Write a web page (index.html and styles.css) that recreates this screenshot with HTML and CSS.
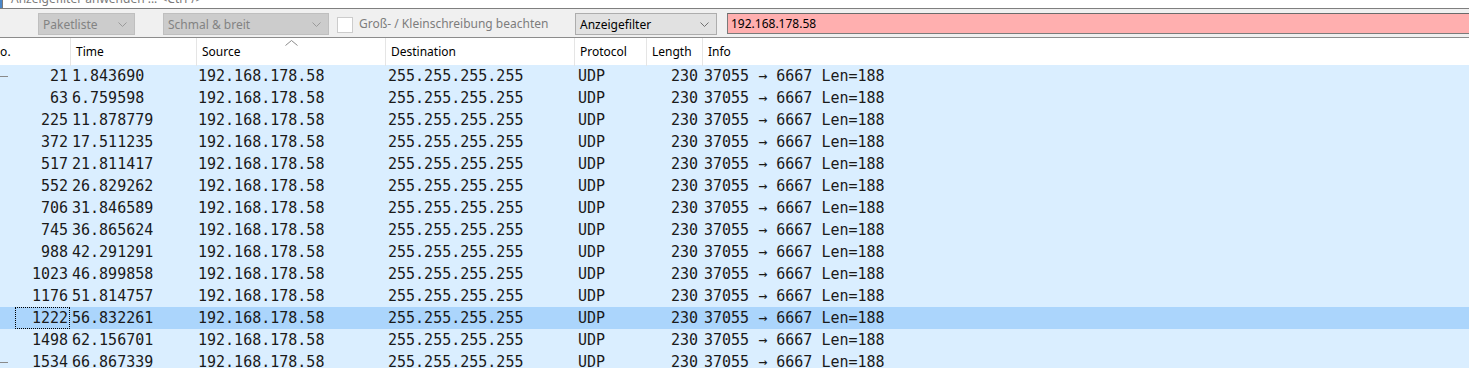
FILE: index.html
```html
<!DOCTYPE html>
<html lang="de">
<head>
<meta charset="utf-8">
<title>Paketliste</title>
<link rel="stylesheet" href="styles.css">
</head>
<body>
<div class="app">
  <div class="filterbar">
    <span class="bm"></span>
    <div class="fb-input"><span class="fb-text">Anzeigefilter anwenden ... &lt;Ctrl-/&gt;</span></div>
  </div>
  <div class="toolbar">
    <div class="combo dis w1"><span>Paketliste</span><svg class="chev" width="9" height="5" viewBox="0 0 9 5"><polyline points="0.5,0.5 4.5,4.5 8.5,0.5" fill="none" stroke="#9a9a9a" stroke-width="1"/></svg></div>
    <div class="combo dis w2"><span>Schmal &amp; breit</span><svg class="chev" width="9" height="5" viewBox="0 0 9 5"><polyline points="0.5,0.5 4.5,4.5 8.5,0.5" fill="none" stroke="#9a9a9a" stroke-width="1"/></svg></div>
    <span class="check"></span>
    <span class="label">Groß- / Kleinschreibung beachten</span>
    <div class="combo act w3"><span>Anzeigefilter</span><svg class="chev" width="9" height="5" viewBox="0 0 9 5"><polyline points="0.5,0.5 4.5,4.5 8.5,0.5" fill="none" stroke="#707070" stroke-width="1"/></svg></div>
    <div class="search">192.168.178.58</div>
  </div>
  <div class="list">
    <div class="row head">
      <div class="c no">No.</div>
      <div class="c">Time</div>
      <div class="c src">Source<svg class="sort" width="13" height="6" viewBox="0 0 13 6"><polyline points="0.5,5.5 6.5,0.5 12.5,5.5" fill="none" stroke="#8a8a8a" stroke-width="1"/></svg></div>
      <div class="c">Destination</div>
      <div class="c">Protocol</div>
      <div class="c">Length</div>
      <div class="c">Info</div>
    </div>
    <div class="row pkt"><div class="c no"><span class="tree"></span><span class="num">21</span></div><div class="c t">1.843690</div><div class="c s">192.168.178.58</div><div class="c d">255.255.255.255</div><div class="c p">UDP</div><div class="c l">230</div><div class="c i">37055 → 6667 Len=188</div></div>
    <div class="row pkt"><div class="c no"><span class="num">63</span></div><div class="c t">6.759598</div><div class="c s">192.168.178.58</div><div class="c d">255.255.255.255</div><div class="c p">UDP</div><div class="c l">230</div><div class="c i">37055 → 6667 Len=188</div></div>
    <div class="row pkt"><div class="c no"><span class="num">225</span></div><div class="c t">11.878779</div><div class="c s">192.168.178.58</div><div class="c d">255.255.255.255</div><div class="c p">UDP</div><div class="c l">230</div><div class="c i">37055 → 6667 Len=188</div></div>
    <div class="row pkt"><div class="c no"><span class="num">372</span></div><div class="c t">17.511235</div><div class="c s">192.168.178.58</div><div class="c d">255.255.255.255</div><div class="c p">UDP</div><div class="c l">230</div><div class="c i">37055 → 6667 Len=188</div></div>
    <div class="row pkt"><div class="c no"><span class="num">517</span></div><div class="c t">21.811417</div><div class="c s">192.168.178.58</div><div class="c d">255.255.255.255</div><div class="c p">UDP</div><div class="c l">230</div><div class="c i">37055 → 6667 Len=188</div></div>
    <div class="row pkt"><div class="c no"><span class="num">552</span></div><div class="c t">26.829262</div><div class="c s">192.168.178.58</div><div class="c d">255.255.255.255</div><div class="c p">UDP</div><div class="c l">230</div><div class="c i">37055 → 6667 Len=188</div></div>
    <div class="row pkt"><div class="c no"><span class="num">706</span></div><div class="c t">31.846589</div><div class="c s">192.168.178.58</div><div class="c d">255.255.255.255</div><div class="c p">UDP</div><div class="c l">230</div><div class="c i">37055 → 6667 Len=188</div></div>
    <div class="row pkt"><div class="c no"><span class="num">745</span></div><div class="c t">36.865624</div><div class="c s">192.168.178.58</div><div class="c d">255.255.255.255</div><div class="c p">UDP</div><div class="c l">230</div><div class="c i">37055 → 6667 Len=188</div></div>
    <div class="row pkt"><div class="c no"><span class="num">988</span></div><div class="c t">42.291291</div><div class="c s">192.168.178.58</div><div class="c d">255.255.255.255</div><div class="c p">UDP</div><div class="c l">230</div><div class="c i">37055 → 6667 Len=188</div></div>
    <div class="row pkt"><div class="c no"><span class="num">1023</span></div><div class="c t">46.899858</div><div class="c s">192.168.178.58</div><div class="c d">255.255.255.255</div><div class="c p">UDP</div><div class="c l">230</div><div class="c i">37055 → 6667 Len=188</div></div>
    <div class="row pkt"><div class="c no"><span class="num">1176</span></div><div class="c t">51.814757</div><div class="c s">192.168.178.58</div><div class="c d">255.255.255.255</div><div class="c p">UDP</div><div class="c l">230</div><div class="c i">37055 → 6667 Len=188</div></div>
    <div class="row pkt sel"><div class="c no"><span class="num focus">1222</span></div><div class="c t">56.832261</div><div class="c s">192.168.178.58</div><div class="c d">255.255.255.255</div><div class="c p">UDP</div><div class="c l">230</div><div class="c i">37055 → 6667 Len=188</div></div>
    <div class="row pkt"><div class="c no"><span class="num">1498</span></div><div class="c t">62.156701</div><div class="c s">192.168.178.58</div><div class="c d">255.255.255.255</div><div class="c p">UDP</div><div class="c l">230</div><div class="c i">37055 → 6667 Len=188</div></div>
    <div class="row pkt"><div class="c no"><span class="tree"></span><span class="num">1534</span></div><div class="c t">66.867339</div><div class="c s">192.168.178.58</div><div class="c d">255.255.255.255</div><div class="c p">UDP</div><div class="c l">230</div><div class="c i">37055 → 6667 Len=188</div></div>
  </div>
</div>
</body>
</html>
```

FILE: styles.css
```css
* { box-sizing: border-box; }
html, body {
  margin: 0;
  padding: 0;
  width: 1469px;
  height: 368px;
  overflow: hidden;
  background: #ffffff;
}
.app {
  font-family: "Noto Sans", "Open Sans", sans-serif;
  font-size: 12px;
  color: #000;
  width: 1469px;
}

/* top (cut-off) display filter */
.filterbar {
  height: 9px;
  display: flex;
  border-bottom: 1px solid #7f7f7f;
  overflow: hidden;
}
.bm {
  width: 2px;
  height: 8px;
  background: #4a86c8;
}
.fb-input {
  flex: 1;
  height: 8px;
  border-left: 1px solid #7a7a7a;
  overflow: hidden;
  padding-left: 8px;
}
.fb-text {
  display: block;
  margin-top: -10px;
  line-height: 18px;
  font-size: 12px;
  color: #7a7a7a;
  white-space: nowrap;
}

/* toolbar */
.toolbar {
  height: 29px;
  background: #f0f0f0;
  border-bottom: 1px solid #8c8c8c;
  display: flex;
  align-items: flex-start;
  padding-top: 4px;
  overflow: hidden;
}
.combo {
  height: 22px;
  display: flex;
  align-items: center;
  justify-content: space-between;
  padding: 0 7px 0 4px;
  white-space: nowrap;
  font-size: 12px;
}
.combo.dis {
  background: #cccccc;
  border: 1px solid #bfbfbf;
  color: #838383;
}
.combo.act {
  background: #e1e1e1;
  border: 1px solid #adadad;
  color: #000;
}
.w1 { width: 97px; margin-left: 38px; }
.w2 { width: 166px; margin-left: 28px; }
.w3 { width: 142px; }
.chev { flex: none; }
.check {
  width: 16px;
  height: 16px;
  margin-top: 4px;
  margin-left: 8px;
  background: #ffffff;
  border: 1px solid #cccccc;
  flex: none;
}
.label {
  width: 222px;
  padding-left: 6px;
  line-height: 22px;
  color: #7d7d7d;
  white-space: nowrap;
  font-size: 12px;
}
.search {
  flex: 1;
  height: 21px;
  margin-left: 10px;
  margin-right: -3px;
  background: #ffafaf;
  border: 1px solid #7a7a7a;
  border-top-color: #6a6a6a;
  padding-left: 3px;
  line-height: 19px;
  font-size: 12px;
  color: #000;
}

/* packet list */
.list {
  margin-left: -14px;
  width: 1483px;
}
.row {
  display: grid;
  grid-template-columns: 84px 126px 189px 189px 72px 56px 1fr;
}
.row.head {
  height: 27px;
  background: #ffffff;
}
.head .c {
  line-height: 28px;
  padding-left: 5px;
  border-left: 1px solid #e5e5e5;
  white-space: nowrap;
  position: relative;
}
.head .c.no { border-left: none; }
.head .src .sort {
  position: absolute;
  top: 2px;
  left: 50%;
  margin-left: -6px;
}
.row.pkt {
  height: 22px;
  background: #daeeff;
  font-family: "DejaVu Sans Mono", "Liberation Mono", monospace;
  font-size: 15px;
  color: #1a1a1a;
}
.row.pkt.sel { background: #abd5fc; }
.pkt .c {
  line-height: 23px;
  white-space: nowrap;
  overflow: hidden;
}
.pkt .no {
  display: flex;
  align-items: center;
  justify-content: space-between;
  padding-right: 0;
}
.tree {
  width: 8px;
  height: 1px;
  margin-left: 14px;
  background: #8a8a8a;
}
.num {
  margin-left: auto;
  padding-right: 2px;
  height: 22px;
  line-height: 23px;
}
.num.focus {
  width: 55px;
  text-align: right;
  border: 1px dotted #000;
  padding-right: 1px;
  line-height: 21px;
}
.pkt .t { padding-left: 2px; }
.pkt .s { padding-left: 2px; }
.pkt .d { padding-left: 3px; }
.pkt .p { padding-left: 4px; }
.pkt .l { text-align: right; padding-right: 4px; }
.pkt .i { padding-left: 2px; }
```
